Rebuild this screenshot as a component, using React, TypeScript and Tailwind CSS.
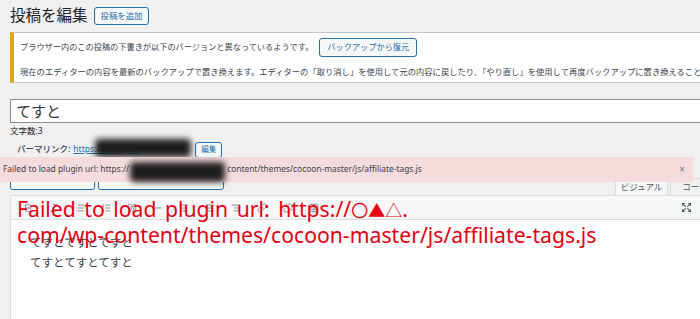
import { Bold, Italic, List, ListOrdered, Quote, Minus, AlignLeft, AlignCenter, AlignRight, Link, Unlink, Table } from 'lucide-react'

const cjk = "font-['Noto_Sans','Noto_Sans_CJK_JP',sans-serif]"

function FullscreenIcon() {
  return (
    <svg width="9" height="9" viewBox="0 0 10 10" className="text-[#50575e]">
      <path d="M1 1l3 3M9 1L6 4M1 9l3-3M9 9L6 6" stroke="currentColor" strokeWidth="1.4" />
      <path d="M0 0h3v1H1v2H0zM10 0H7v1h2v2h1zM0 10h3V9H1V7H0zM10 10H7V9h2V7h1z" fill="currentColor" />
    </svg>
  )
}

export default function App() {
  const toolbar = [Bold, Italic, List, ListOrdered, Quote, Minus, AlignLeft, AlignCenter, AlignRight, Link, Unlink, Table]

  return (
    <div className={`relative w-[700px] h-[319px] overflow-hidden bg-[#f0f0f1] text-[#3c434a] ${cjk}`}>
      <div className="w-[730px] pl-[10px]">
        {/* Heading */}
        <div className="flex items-center h-[30px] pt-[2px] gap-[6px]">
          <h1 className="text-[15.5px] leading-none text-[#1d2327]">投稿を編集</h1>
          <button className="h-[18px] px-[6px] border border-[#2271b1] rounded-[3px] bg-[#f6f7f7] text-[8.4px] leading-none text-[#2271b1]">
            投稿を追加
          </button>
        </div>

        {/* Autosave notice */}
        <div className="mt-[2px] h-[51px] bg-white border border-[#c3c4c7] border-l-4 border-l-[#dba617] pl-[6px] pt-[5px] overflow-hidden">
          <div className="flex items-center h-[19px] gap-[6px] text-[8.2px] whitespace-nowrap">
            <span>ブラウザー内のこの投稿の下書きが以下のバージョンと異なっているようです。</span>
            <button className="h-[19px] px-[7px] border border-[#2271b1] rounded-[3px] bg-[#f6f7f7] text-[8.2px] leading-none text-[#2271b1]">
              バックアップから復元
            </button>
          </div>
          <p className="mt-[9px] h-[12px] leading-[12px] text-[8.3px] whitespace-nowrap">
            現在のエディターの内容を最新のバックアップで置き換えます。エディターの「取り消し」を使用して元の内容に戻したり、「やり直し」を使用して再度バックアップに置き換えることができます。
          </p>
        </div>

        {/* Title */}
        <div className="mt-[16px] h-[24px] bg-white border border-[#8c8f94] pl-[5px] flex items-center text-[15px] text-[#2c3338]">
          てすと
        </div>
        <div className="mt-[2px] h-[12px] leading-[12px] text-[8.5px] text-[#1d2327]">文字数:3</div>

        {/* Permalink */}
        <div className="mt-[4px] h-[17px] pl-[7px] flex items-center text-[8.5px] text-[#3c434a]">
          <span className="font-medium">パーマリンク:</span>
          <span className="ml-[3px] text-[#2271b1] underline w-[120px]">https://example/</span>
          <button className="ml-[2px] h-[16px] px-[5px] border border-[#2271b1] rounded-[3px] bg-[#f6f7f7] text-[7.5px] leading-none text-[#2271b1]">
            編集
          </button>
        </div>

        {/* Editor tools */}
        <div className="flex items-end h-[37px] pr-[10px]">
          <div className="flex gap-[3px] mb-[5px]">
            <button className="h-[26px] w-[85px] border border-[#2271b1] rounded-[3px] bg-[#f6f7f7] flex items-center pl-[10px] gap-[3px] text-[8px] text-[#2271b1]">
              <span className="w-[2px] h-[2px] bg-[#2271b1]" />
              <span className="w-[2px] h-[2px] bg-[#2271b1]" />
              <span className="ml-[4px]">メディアを追加</span>
            </button>
            <button className="h-[26px] w-[126px] border border-[#2271b1] rounded-[3px] bg-[#f6f7f7] text-[8px] text-[#2271b1]">
              お問い合わせフォームを追加
            </button>
          </div>
          <div className="ml-auto flex gap-[2px]">
            <div className="w-[53px] h-[17px] bg-[#f6f7f7] border border-b-0 border-[#dcdcde] flex items-center justify-center text-[8.5px] text-[#50575e]">
              ビジュアル
            </div>
            <div className="w-[50px] h-[17px] bg-[#f0f0f1] border border-b-0 border-[#dcdcde] flex items-center justify-center text-[8.5px] text-[#50575e]">
              コード
            </div>
          </div>
        </div>

        {/* Editor */}
        <div className="h-[130px] border border-[#dcdcde] bg-white">
          <div className="h-[24px] bg-[#f6f7f7] border-b border-[#dcdcde] flex items-center pl-[12px] gap-[16px] text-[#8c8f94]">
            {toolbar.map((Icon, i) => (
              <Icon key={i} size={10} strokeWidth={2.4} />
            ))}
            <span className="ml-auto mr-[38px]">
              <FullscreenIcon />
            </span>
          </div>
          <div className="pt-[13px] pl-[19px] text-[11.5px] leading-[20px] text-[#3c434a]">
            <p>てすとてすとてすと</p>
            <p>てすとてすとてすと</p>
          </div>
        </div>
      </div>

      {/* Blurred permalink */}
      <div className="absolute left-[95px] top-[139px] w-[96px] h-[18px] rounded-[4px] bg-[#1e1e1e] blur-[3px]" />

      {/* Plugin error bar */}
      <div className="absolute left-0 top-[157px] w-[693px] h-[25px] bg-[#f4dbdc] flex items-center pl-[3px] pr-[8px] text-[8.4px] text-[#3c434a] font-['Noto_Sans',sans-serif]">
        <span>Failed to load plugin url: https://</span>
        <span className="inline-block w-[98px]" />
        <span>content/themes/cocoon-master/js/affiliate-tags.js</span>
        <span className="ml-auto text-[10px] text-[#787c82]">×</span>
      </div>
      <div className="absolute left-[130px] top-[162px] w-[95px] h-[20px] rounded-[4px] bg-[#1e1e1e] blur-[3px]" />

      {/* Annotation */}
      <div className="absolute left-[17px] top-[197px] text-[21.2px] leading-[24px] text-[#e60012] whitespace-nowrap font-['Noto_Sans','Noto_Sans_CJK_JP',sans-serif]">
        <p className="[word-spacing:3px]">
          Failed to load plugin url: https://<span className="text-[17px]">〇▲△</span>.
        </p>
        <p>com/wp-content/themes/cocoon-master/js/affiliate-tags.js</p>
      </div>
    </div>
  )
}
